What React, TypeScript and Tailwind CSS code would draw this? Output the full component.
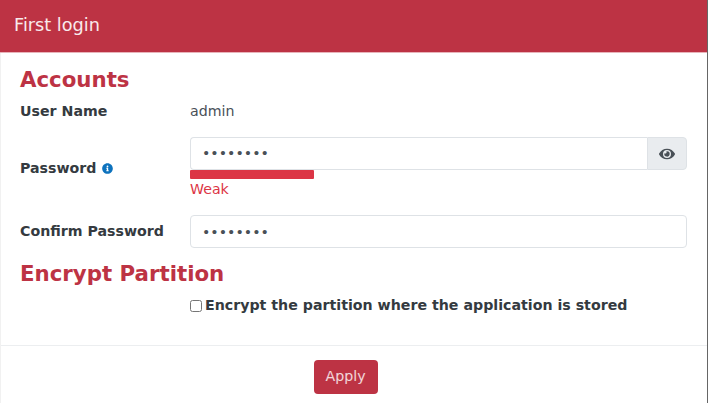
import { FaEye, FaInfoCircle } from 'react-icons/fa';

const font = { fontFamily: '"DejaVu Sans", sans-serif' };

export default function App() {
  return (
    <div className="w-[708px] h-[403px] overflow-hidden bg-white text-[#212529] flex flex-col border-r border-r-[#666] font-['DejaVu_Sans',sans-serif]">
      {/* Title bar */}
      <div className="h-[53px] shrink-0 bg-[#bd3344] border-b border-[#e8b4ba] flex items-center pl-[14px] text-white/90 text-[17.7px] pb-[2px]">
        First login
      </div>

      <div className="flex-1 flex flex-col border-l border-l-[#f1f1f1]">
        <div className="h-[292px] shrink-0 pl-[19px] pr-[20px] flex flex-col">
          <h2 className="text-[#bd3344] font-bold text-[21.3px] leading-[24px] mt-[15px]">Accounts</h2>

          <div className="flex items-center h-[24px] mt-[8px]">
            <div className="w-[170px] font-bold text-[14.2px] text-[#343a40]">User Name</div>
            <div className="text-[14.2px] text-[#495057]">admin</div>
          </div>

          {/* Password row */}
          <div className="flex mt-[13px]">
            <div className="w-[170px] font-bold text-[14.2px] text-[#343a40] flex items-center gap-[5px] h-[63px]">
              Password
              <FaInfoCircle className="w-[11px] h-[11px] text-[#0d72bd]" />
            </div>
            <div className="flex-1 flex flex-col">
              <div className="flex h-[33px]">
                <input
                  type="password"
                  defaultValue="password"
                  readOnly
                  className="flex-1 min-w-0 border border-[#dee2e6] border-r-0 rounded-l-[4px] px-[11px] text-[14.2px] text-[#495057] outline-none"
                  style={font}
                />
                <div className="w-[40px] bg-[#e9ecef] border border-[#dee2e6] rounded-r-[4px] flex items-center justify-center">
                  <FaEye className="w-[16px] h-[16px] text-[#495057]" />
                </div>
              </div>
              <div className="w-[124px] h-[9px] bg-[#dc3545] rounded-[1px]"></div>
              <div className="text-[#dc3545] text-[14.2px] leading-[16px] mt-[2px]">Weak</div>
            </div>
          </div>

          {/* Confirm row */}
          <div className="flex items-center mt-[15px]">
            <div className="w-[170px] font-bold text-[14.2px] text-[#343a40]">Confirm Password</div>
            <input
              type="password"
              defaultValue="password"
              readOnly
              className="flex-1 min-w-0 h-[33px] border border-[#dee2e6] rounded-[4px] px-[11px] text-[14.2px] text-[#495057] outline-none"
              style={font}
            />
          </div>

          <h2 className="text-[#bd3344] font-bold text-[21.3px] leading-[24px] mt-[14px]">Encrypt Partition</h2>

          <div className="flex items-center ml-[170px] mt-[9px] gap-[3px]">
            <input type="checkbox" readOnly className="w-[12px] h-[12px] m-0" />
            <span className="font-bold text-[14.2px] text-[#343a40]">Encrypt the partition where the application is stored</span>
          </div>
        </div>

        {/* Footer */}
        <div className="flex-1 border-t border-[#eceef0] flex justify-center pt-[14px] pr-[17px]">
          <button className="w-[64px] h-[34px] bg-[#bd3344] rounded-[4px] text-white/80 text-[14.2px]">Apply</button>
        </div>
      </div>
    </div>
  );
}
